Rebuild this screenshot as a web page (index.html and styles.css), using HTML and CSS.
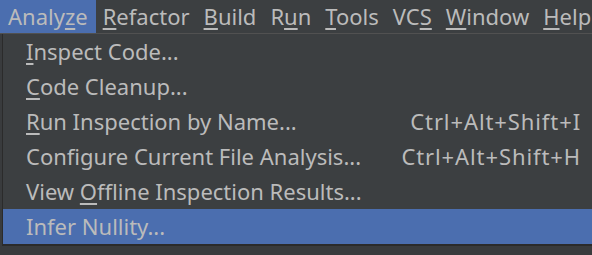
FILE: index.html
```html
<!DOCTYPE html>
<html lang="en">
<head>
    <meta charset="UTF-8">
    <title>Analyze menu</title>
    <link rel="stylesheet" href="styles.css">
</head>
<body>
    <div class="menubar">
        <div class="menu active">Analy<u>z</u>e</div>
        <div class="menu"><u>R</u>efactor</div>
        <div class="menu"><u>B</u>uild</div>
        <div class="menu">R<u>u</u>n</div>
        <div class="menu"><u>T</u>ools</div>
        <div class="menu">VC<u>S</u></div>
        <div class="menu"><u>W</u>indow</div>
        <div class="menu"><u>H</u>elp</div>
    </div>
    <div class="popup">
        <div class="item"><span><u>I</u>nspect Code...</span></div>
        <div class="item"><span><u>C</u>ode Cleanup...</span></div>
        <div class="item"><span><u>R</u>un Inspection by Name...</span><span class="key">Ctrl+Alt+Shift+I</span></div>
        <div class="item"><span>Configure Current File Analysis...</span><span class="key">Ctrl+Alt+Shift+H</span></div>
        <div class="item"><span>View <u>O</u>ffline Inspection Results...</span></div>
        <div class="item selected"><span>Infer Nullity...</span></div>
    </div>
</body>
</html>
```

FILE: styles.css
```css
* {
    margin: 0;
    padding: 0;
    box-sizing: border-box;
}

body {
    font-family: "Noto Sans", "Open Sans", sans-serif;
    font-size: 22px;
    color: #bbbbbb;
    background-color: #393b3d;
    width: 592px;
    height: 255px;
    overflow: hidden;
}

u {
    text-underline-offset: 3px;
}

.menubar {
    display: flex;
    height: 34px;
    background-color: #3c3f41;
    border-bottom: 1px solid #515151;
    white-space: nowrap;
}

.menu {
    height: 33px;
    line-height: 33px;
    padding: 0 7px;
}

.menu.active {
    background-color: #4b6eaf;
    padding: 0 8px;
}

.popup {
    margin-left: 2px;
    background-color: #3c3f41;
    border-left: 1px solid #2b2b2b;
    border-bottom: 2px solid #2b2b2b;
}

.item {
    display: flex;
    justify-content: space-between;
    height: 35px;
    line-height: 35px;
    padding: 0 11px 0 23px;
    white-space: nowrap;
}

.item.selected {
    background-color: #4b6eaf;
}

.key {
    margin-left: 30px;
    letter-spacing: 0.9px;
}
```
